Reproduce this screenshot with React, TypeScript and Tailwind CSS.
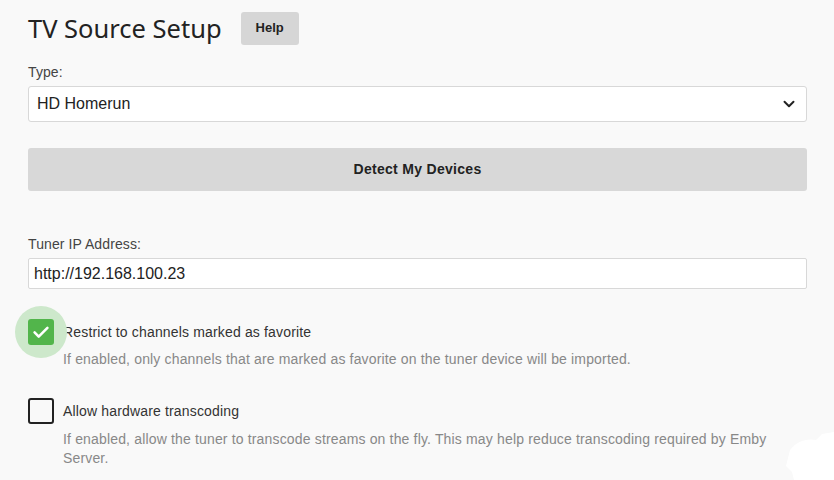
import React, { useState } from 'react';

function Checkbox({ checked, focused }: { checked: boolean; focused?: boolean }) {
  return (
    <div className="relative h-[26px] w-[26px] shrink-0">
      {focused && (
        <span className="absolute left-1/2 top-1/2 h-[52px] w-[52px] -translate-x-1/2 -translate-y-1/2 rounded-full bg-[#cde8cb]" />
      )}
      {checked ? (
        <span className="relative flex h-[26px] w-[26px] items-center justify-center rounded-[3px] bg-[#52b54b]">
          <svg viewBox="0 0 24 24" className="h-[22px] w-[22px]" fill="none" stroke="white" strokeWidth="2.8" strokeLinecap="round" strokeLinejoin="round">
            <path d="M5 12.5l4.5 4.5L19 7.5" />
          </svg>
        </span>
      ) : (
        <span className="relative block h-[26px] w-[26px] rounded-[3px] border-2 border-[#222]" />
      )}
    </div>
  );
}

export default function App() {
  const [favOnly] = useState(true);
  const [hwTranscode] = useState(false);

  return (
    <div className="relative h-[480px] w-[834px] overflow-hidden bg-[#f9f9f9] font-['Liberation_Sans',Arial,sans-serif] text-[#222]">
      <div className="flex flex-col pl-[28px] pr-[27px] pt-[11px]">
        {/* Header */}
        <div className="flex items-center gap-[19px]">
          <h1 className="font-['Noto_Sans',sans-serif] text-[25.5px] leading-[34px] text-[#222]">TV Source Setup</h1>
          <button className="h-[33px] rounded-[3px] bg-[#d6d6d6] px-[15px] text-[13px] font-bold text-[#222]">Help</button>
        </div>

        {/* Type */}
        <label className="mt-[19px] text-[14px] leading-[16px] tracking-[0.1px] text-[#444]">Type:</label>
        <div className="mt-[6px] flex h-[36px] items-center justify-between rounded-[3px] border border-[#d8d8d8] bg-white pl-[8px] pr-[8px]">
          <span className="text-[16px] text-[#222]">HD Homerun</span>
          <svg viewBox="0 0 24 24" className="h-[18px] w-[18px]" fill="none" stroke="#222" strokeWidth="2.6" strokeLinecap="round" strokeLinejoin="round">
            <path d="M6 9l6 6 6-6" />
          </svg>
        </div>

        <button className="mt-[26px] h-[43px] rounded-[3px] bg-[#d8d8d8] text-[14px] font-bold tracking-[0.3px] text-[#222]">
          Detect My Devices
        </button>

        {/* Tuner IP */}
        <label className="mt-[45px] text-[14px] leading-[16px] tracking-[0.1px] text-[#444]">Tuner IP Address:</label>
        <div className="mt-[6px] flex h-[31px] items-center rounded-[2px] border border-[#d8d8d8] bg-white pl-[5px]">
          <span className="text-[16px] text-[#222]">http://192.168.100.23</span>
        </div>

        {/* Favorite */}
        <div className="mt-[30px] flex items-center gap-[9px]">
          <Checkbox checked={favOnly} focused />
          <span className="text-[14px] tracking-[0.16px] text-[#333]">Restrict to channels marked as favorite</span>
        </div>
        <p className="ml-[35px] mt-[5px] text-[14px] leading-[19px] tracking-[0.16px] text-[#888]">
          If enabled, only channels that are marked as favorite on the tuner device will be imported.
        </p>

        {/* Hardware transcoding */}
        <div className="mt-[29px] flex items-center gap-[9px]">
          <Checkbox checked={hwTranscode} />
          <span className="text-[14px] tracking-[0.16px] text-[#333]">Allow hardware transcoding</span>
        </div>
        <p className="ml-[35px] mt-[6px] w-[720px] text-[14px] leading-[19px] tracking-[0.16px] text-[#888]">
          If enabled, allow the tuner to transcode streams on the fly. This may help reduce transcoding required by Emby Server.
        </p>
      </div>

      {/* stray white blob bottom right */}
      <svg className="absolute bottom-0 right-0" width="52" height="52" viewBox="0 0 52 52">
        <path d="M8 22 C14 14 24 10 34 12 L40 6 L52 4 L52 52 L12 52 L10 44 L4 38 Z" fill="#ffffff" />
      </svg>
    </div>
  );
}
